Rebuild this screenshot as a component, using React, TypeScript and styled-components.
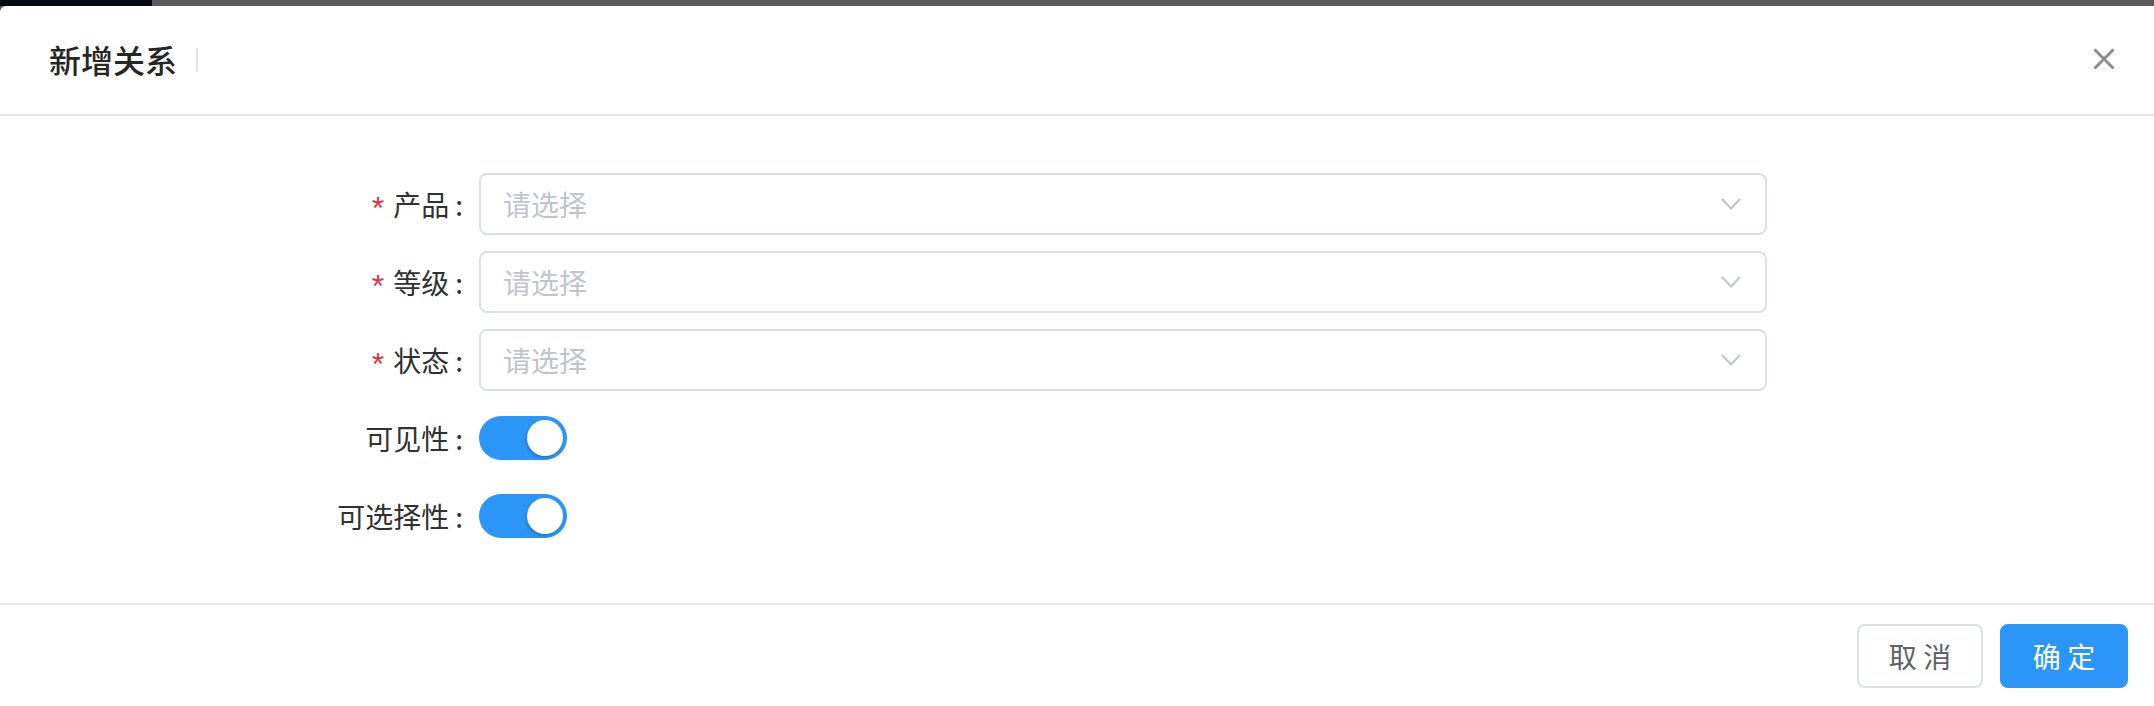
import React from "react";
import styled, { createGlobalStyle } from "styled-components";

const GlobalStyle = createGlobalStyle`
  html, body {
    margin: 0;
    padding: 0;
    background: #595959;
  }
  body {
    font-family: "Noto Sans CJK SC", "Noto Sans", sans-serif;
  }
  * { box-sizing: border-box; }
`;

const Page = styled.div`
  width: 2154px;
  height: 706px;
  overflow: hidden;
  display: flex;
  flex-direction: column;
  background: #595959;
`;

const Strip = styled.div`
  height: 6px;
  display: flex;
  flex-shrink: 0;
`;

const StripDark = styled.div`
  width: 152px;
  background: #040a12;
`;

const StripGrey = styled.div`
  flex: 1;
  background: #5a5a5a;
`;

const Modal = styled.div`
  flex: 1;
  background: #ffffff;
  border-top-left-radius: 6px;
  display: flex;
  flex-direction: column;
`;

const Header = styled.div`
  height: 110px;
  flex-shrink: 0;
  display: flex;
  align-items: center;
  padding: 0 39px 2px 49px;
  border-bottom: 2px solid #e8e8e8;
`;

const Title = styled.div`
  font-size: 32px;
  font-weight: 500;
  color: #262626;
  line-height: 1;
`;

const TitleDivider = styled.span`
  width: 2px;
  height: 23px;
  margin-left: 19px;
  background: #e2e2e2;
`;

const Spacer = styled.div`
  flex: 1;
`;

const CloseButton = styled.button`
  width: 22px;
  height: 22px;
  padding: 0;
  border: 0;
  background: transparent;
  display: flex;
  cursor: pointer;
`;

const Body = styled.div`
  display: flex;
  flex-direction: column;
  gap: 16px;
  padding: 57px 0 56px 0;
  border-bottom: 2px solid #e8e8e8;
`;

const FormRow = styled.div`
  display: grid;
  grid-template-columns: 479px 1288px;
  align-items: center;
  height: 62px;
`;

const Label = styled.label`
  display: flex;
  justify-content: flex-end;
  align-items: center;
  padding-right: 16px;
  font-size: 28px;
  color: #303133;
  line-height: 1;
`;

const Colon = styled.span`
  margin-left: 6px;
`;

const Required = styled.span`
  color: #e0353f;
  margin-right: 9px;
  font-family: "Liberation Sans", sans-serif;
  font-size: 32px;
  line-height: 1;
  position: relative;
  top: 4px;
`;

const Select = styled.div`
  height: 62px;
  border: 2px solid #dcdfe6;
  border-radius: 8px;
  display: flex;
  align-items: center;
  padding: 0 24px 0 22px;
`;

const Placeholder = styled.span`
  flex: 1;
  font-size: 28px;
  color: #c0c4cc;
  line-height: 1;
`;

const Switch = styled.div<{ $on: boolean }>`
  width: 88px;
  height: 44px;
  border-radius: 22px;
  background: ${(p) => (p.$on ? "#2c95f8" : "#dcdfe6")};
  display: flex;
  align-items: center;
  justify-content: ${(p) => (p.$on ? "flex-end" : "flex-start")};
  padding: 0 4px;
`;

const Knob = styled.span`
  width: 36px;
  height: 36px;
  border-radius: 50%;
  background: #ffffff;
  box-shadow: -1px 2px 3px rgba(0, 40, 90, 0.25);
`;

const Footer = styled.div`
  display: flex;
  justify-content: flex-end;
  gap: 17px;
  padding: 19px 26px 0 0;
`;

const Button = styled.button<{ $primary?: boolean }>`
  height: 64px;
  width: ${(p) => (p.$primary ? "128px" : "126px")};
  border-radius: 8px;
  border: 2px solid ${(p) => (p.$primary ? "#2c95f8" : "#dcdfe6")};
  background: ${(p) => (p.$primary ? "#2c95f8" : "#ffffff")};
  color: ${(p) => (p.$primary ? "#ffffff" : "#606266")};
  font-family: "Noto Sans CJK SC", "Noto Sans", sans-serif;
  font-size: 28px;
  line-height: 1;
  padding: 0;
  cursor: pointer;
`;

const Chevron = () => (
  <svg width="20" height="12" viewBox="0 0 20 12" fill="none">
    <path d="M1 1 L10 10.5 L19 1" stroke="#c0c4cc" strokeWidth="2" />
  </svg>
);

const CloseIcon = () => (
  <svg width="22" height="22" viewBox="0 0 22 22" fill="none">
    <path d="M1.5 1.5 L20.5 20.5 M20.5 1.5 L1.5 20.5" stroke="#8c8c8c" strokeWidth="3" />
  </svg>
);

const selects = ["产品", "等级", "状态"];
const switches = ["可见性", "可选择性"];

export default function App() {
  return (
    <Page>
      <GlobalStyle />
      <Strip>
        <StripDark />
        <StripGrey />
      </Strip>
      <Modal>
        <Header>
          <Title>新增关系</Title>
          <TitleDivider />
          <Spacer />
          <CloseButton aria-label="关闭">
            <CloseIcon />
          </CloseButton>
        </Header>
        <Body>
          {selects.map((name) => (
            <FormRow key={name}>
              <Label>
                <Required>*</Required>
                {name}
                <Colon>:</Colon>
              </Label>
              <Select>
                <Placeholder>请选择</Placeholder>
                <Chevron />
              </Select>
            </FormRow>
          ))}
          {switches.map((name) => (
            <FormRow key={name}>
              <Label>
                {name}
                <Colon>:</Colon>
              </Label>
              <div>
                <Switch $on>
                  <Knob />
                </Switch>
              </div>
            </FormRow>
          ))}
        </Body>
        <Footer>
          <Button>取 消</Button>
          <Button $primary>确 定</Button>
        </Footer>
      </Modal>
    </Page>
  );
}
